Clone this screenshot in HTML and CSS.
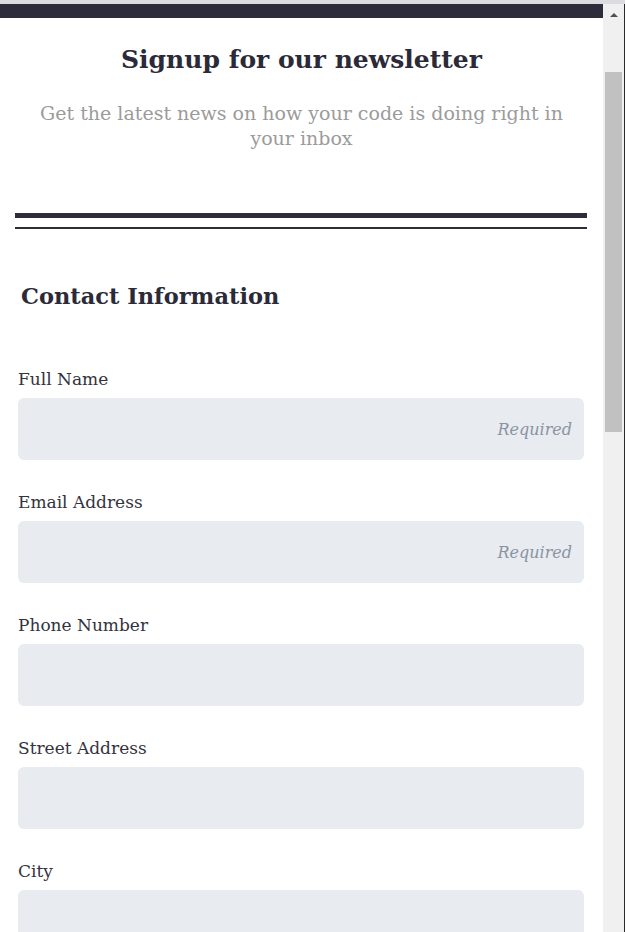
FILE: index.html
```html
<!DOCTYPE html>
<html lang="en">
<head>
<meta charset="utf-8">
<title>Signup for our newsletter</title>
<link rel="stylesheet" href="styles.css">
</head>
<body>
<div class="window">
  <main class="page">
    <div class="topbar"></div>
    <header class="intro">
      <h1 class="title">Signup for our newsletter</h1>
      <p class="subtitle">Get the latest news on how your code is doing right in your inbox</p>
    </header>
    <div class="divider"></div>
    <section class="form">
      <h2 class="section-title">Contact Information</h2>
      <label class="field">
        <span class="label">Full Name</span>
        <input class="input" type="text" placeholder="Required">
      </label>
      <label class="field">
        <span class="label">Email Address</span>
        <input class="input" type="email" placeholder="Required">
      </label>
      <label class="field">
        <span class="label">Phone Number</span>
        <input class="input" type="tel">
      </label>
      <label class="field">
        <span class="label">Street Address</span>
        <input class="input" type="text">
      </label>
      <label class="field">
        <span class="label">City</span>
        <input class="input" type="text">
      </label>
    </section>
  </main>
  <div class="scrollbar">
    <div class="arrow"></div>
    <div class="thumb"></div>
  </div>
</div>
</body>
</html>
```
FILE: styles.css
```css
html, body {
  margin: 0;
  padding: 0;
  height: 100%;
  overflow: hidden;
}
body {
  border-top: 4px solid #dcdce0;
  box-sizing: border-box;
  font-family: "DejaVu Serif", "Liberation Serif", serif;
  background: #fff;
}
.window {
  display: flex;
  height: 928px;
}
.page {
  width: 603px;
  flex: none;
  overflow: hidden;
}
.topbar {
  height: 14px;
  background: #2d2c3a;
}
.intro {
  text-align: center;
  padding: 22px 30px 0;
}
.title {
  margin: 0;
  font-size: 25px;
  font-weight: bold;
  color: #2b2a38;
  line-height: 40px;
}
.subtitle {
  margin: 21px 0 0;
  font-size: 19px;
  line-height: 25px;
  color: #9b9b9b;
}
.divider {
  margin: 62px 16px 0 15px;
  height: 9px;
  border-top: 5px solid #2d2c3a;
  border-bottom: 2px solid #2d2c3a;
}
.form {
  padding: 52px 19px 0 18px;
  display: flex;
  flex-direction: column;
  gap: 30px;
}
.section-title {
  margin: 0 0 26px 3px;
  font-size: 22.5px;
  font-weight: bold;
  color: #2b2a38;
  line-height: 30px;
}
.field {
  display: flex;
  flex-direction: column;
  gap: 7px;
}
.label {
  font-size: 17px;
  line-height: 24px;
  color: #333340;
}
.input {
  height: 62px;
  box-sizing: border-box;
  border: none;
  border-radius: 6px;
  background: #e8ecf0;
  padding: 0 12px;
  font-family: inherit;
  font-size: 16px;
  text-align: right;
}
.input::placeholder {
  color: #8a93a3;
  font-style: italic;
}
.scrollbar {
  width: 21px;
  flex: none;
  background: #f0f0f0;
  border-right: 1px solid #2a2a2a;
  display: flex;
  flex-direction: column;
  align-items: center;
}
.arrow {
  margin-top: 9px;
  width: 0;
  height: 0;
  border-left: 4px solid transparent;
  border-right: 4px solid transparent;
  border-bottom: 4px solid #505050;
}
.thumb {
  margin-top: 55px;
  width: 17px;
  height: 360px;
  background: #c1c1c1;
}
```
